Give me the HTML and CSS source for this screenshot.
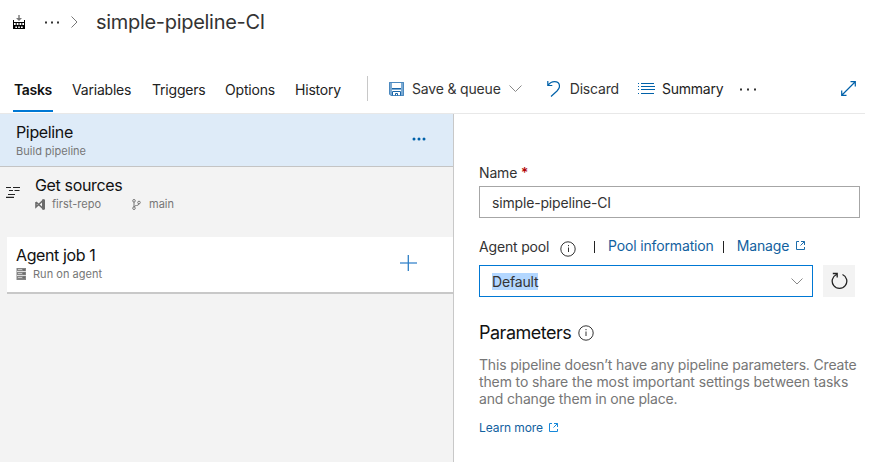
FILE: index.html
```html
<!DOCTYPE html>
<html lang="en">
<head>
<meta charset="utf-8">
<title>simple-pipeline-CI</title>
<link rel="stylesheet" href="styles.css">
</head>
<body>
<header class="crumbs">
  <svg class="build-icon" width="12" height="14" viewBox="0 0 12 14"><path d="M5.300 0h1.400v3H9L6 6 3 3h2.300z" fill="#777"/><path d="M0 5h1v2h10V5h1v9H0z" fill="#000"/><path d="M1 8h1.700v2H1zM3.700 8h1.800v2H3.700zM6.500 8h1.800v2H6.500zM9.300 8H11v2H9.300zM2.300 11.500H4V13H2.300zM5.200 11.500h1.600V13H5.200zM8 11.500h1.700V13H8z" fill="#fff"/></svg>
  <svg class="crumb-dots" width="16" height="3" viewBox="0 0 16 3" fill="#333"><path d="M1 .5h2v2H1zM7 .5h2v2H7zM13 .5h2v2h-2z"/></svg>
  <svg class="crumb-arrow" width="7" height="12" viewBox="0 0 7 12" fill="none" stroke="#777"><path d="M.5.500 6 6 .5 11.500"/></svg>
  <h1><span>simple-pipeline-CI</span></h1>
</header>
<nav class="toolbar">
  <a class="tab active">Tasks</a>
  <a class="tab variables">Variables</a>
  <a class="tab triggers">Triggers</a>
  <a class="tab options">Options</a>
  <a class="tab history">History</a>
  <span class="divider"></span>
  <button class="command save"><svg width="15" height="14" viewBox="0 0 15 14"><path d="M0 0h15v14H2l-2-2z" fill="#7baad3"/><path d="M3 1h9v5H3zM3 8h9v5H3z" fill="#fff"/><path d="M.5.500h14v13H2L.5 12z" fill="none" stroke="#4c89bf"/><path d="M3 6.500h9M3.500 13.500V9.500h8v4M6.500 13.500v-2h2v2" fill="none" stroke="#1a66a8"/></svg><span>Save &amp; queue</span><svg width="13" height="7" viewBox="0 0 13 7" fill="none" stroke="#888"><path d="M.5.500l6 6 6-6"/></svg></button>
  <button class="command discard"><svg width="13" height="17" viewBox="0 0 13 17" fill="none" stroke="#0061a9" stroke-width="1.200"><path d="M.8 1v4.500h4.500M1 5.200C3 2.500 5 1.600 7.500 1.600c3 0 5 2 5 4.600 0 2-1 3.300-2.500 4.800L4 16.500"/></svg><span>Discard</span></button>
  <button class="command summary"><svg width="17" height="11" viewBox="0 0 17 11" stroke="#0061a9"><path d="M3 .5h13M3 3.500h14M3 6.500h14M3 10.500h13"/><path d="M0 .5h1M0 3.500h1M0 6.500h1M0 10.500h1"/></svg><span>Summary</span></button>
  <svg class="more" width="18" height="3" viewBox="0 0 18 3" fill="#333"><path d="M1 .5h2v2H1zM8 .5h2v2H8zM15 .5h2v2h-2z"/></svg>
  <svg class="expand" width="15" height="15" viewBox="0 0 15 15" fill="none" stroke="#0061a9" stroke-width="1.200"><path d="M1 14 14 1M9.500.7h4.800v4.800M.7 9.500v4.800h4.800"/></svg>
</nav>
<main>
  <aside>
    <section class="pipeline"><div><h2><span>Pipeline</span></h2><p class="build-sub">Build pipeline</p></div>
      <svg width="14" height="4" viewBox="0 0 14 4" fill="#0061a9"><circle cx="2" cy="2" r="1.500"/><circle cx="7" cy="2" r="1.500"/><circle cx="12" cy="2" r="1.500"/></svg></section>
    <section class="sources">
      <svg class="steps" width="15" height="12" viewBox="0 0 15 12" stroke="#222" stroke-width="1.200"><path d="M0 1.500h5M7 1.500h7M3 4.500h4M8.500 4.500h5M2 8.500h7M0 11.400h8"/></svg>
      <div><h2><span class="get">Get sources</span></h2>
      <p><svg width="11" height="11" viewBox="0 0 11 11" fill="none" stroke="#6b6b6b" stroke-width="1.600"><path d="M1 3v5L8 1.500v8L1 3"/><path d="M8.500 0.500v10" stroke-width="3"/></svg><span class="repo">first-repo</span><svg class="branch" width="9" height="11" viewBox="0 0 9 11" fill="none" stroke="#777"><circle cx="2" cy="1.800" r="1.300"/><circle cx="2" cy="9.200" r="1.300"/><circle cx="7" cy="3.500" r="1.300"/><path d="M2 3v5M7 5c0 2-5 1-5 3"/></svg><span class="main">main</span></p></div>
    </section>
    <section class="job"><div><h2><span class="agent">Agent job 1</span></h2><p><svg width="11" height="12" viewBox="0 0 11 12"><path d="M.5 0h9.500v12H.5z" fill="#858585"/><path d="M1 3.500h9M1 7.500h9" stroke="#ddd"/><path d="M2 1.500h4M2 5.500h4M2 9.500h4" stroke="#c4c4c4"/><path d="M8 1v2M8 4.500v2M8 8.500v2" stroke="#555"/></svg><span class="run">Run on agent</span></p></div>
      <svg class="plus" width="17" height="16" viewBox="0 0 17 16"><path d="M0 8h17" stroke="#7eb0de" stroke-width="2"/><path d="M8.300 0v16" stroke="#2e7fc6" stroke-width="1.300"/></svg></section>
  </aside>
  <form>
    <label class="name-label"><span>Name</span> <b>*</b></label>
    <div class="input"><span>simple-pipeline-CI</span></div>
    <div class="pool-row"><span class="pool">Agent pool</span><svg class="info" width="16" height="16" viewBox="0 0 16 16" fill="none" stroke="#333"><circle cx="8" cy="8" r="7.200"/><path d="M8.500 6.500V11M8.500 4v1.200"/></svg><i></i><a class="pool-info">Pool information</a><i class="second"></i><a class="manage">Manage</a><svg class="external" width="9" height="9" viewBox="0 0 9 9" fill="none" stroke="#1b6cab"><path d="M3 .5H.5v8h8V6M5 .5h3.500V4M8.500.500l-4 4"/></svg></div>
    <div class="select-row"><div class="input select"><span>Default</span><svg width="12" height="7" viewBox="0 0 12 7" fill="none" stroke="#888"><path d="M.5.500 6 6 11.500.500"/></svg></div>
      <button type="button" class="refresh"><svg width="17" height="18" viewBox="0 0 17 18" fill="none" stroke="#222" stroke-width="1.300"><path d="M5.500 2.500a7.300 7.300 0 1 0 6 0M1.800 1.500h4.400v4"/></svg></button></div>
    <h3><span>Parameters</span><svg width="16" height="16" viewBox="0 0 16 16" fill="none" stroke="#333"><circle cx="8" cy="8" r="7.200"/><path d="M8 6.500V11M8 4v1.200"/></svg></h3>
    <p class="copy"><span class="l1">This pipeline doesn’t have any pipeline parameters. Create</span><br><span class="l2">them to share the most important settings between tasks</span><br><span class="l3">and change them in one place.</span></p>
    <div class="learn"><a>Learn more</a><svg width="9" height="9" viewBox="0 0 9 9" fill="none" stroke="#1688da"><path d="M3 .5H.5v8h8V6M5 .5h3.500V4M8.500.500l-4 4"/></svg></div>
  </form>
</main>
</body>
</html>
```
FILE: styles.css
```css
* { box-sizing: border-box; }
body { margin: 0; width: 869px; height: 462px; overflow: hidden; background: #fff; font: 14px/18px Inter, sans-serif; letter-spacing: -.17px; color: #333; }
h1, h2, h3, p { margin: 0; font-weight: 400; }
svg { display: block; flex: none; }
span, a { white-space: nowrap; }
button { border: 0; padding: 0; background: none; font: inherit; letter-spacing: inherit; color: inherit; }

.crumbs { display: flex; align-items: center; height: 44px; padding-left: 13px; }
.crumb-dots { margin-left: 19px; }
.crumb-arrow { margin-left: 11px; }
.crumbs h1 { margin-left: 18px; font-size: 20px; line-height: 24px; letter-spacing: -.3px; color: #333; }

.toolbar { display: flex; align-items: center; height: 70px; margin-right: 4px; padding: 20px 0 0 13px; border-bottom: 1px solid #e8e8e8; }
.tab { height: 49px; line-height: 51px; width: 58px; letter-spacing: -.2px; }
.toolbar .tab { color: #222; }
.tab.active { width: 40px; height: 48px; margin: -1px 19px 0 0; padding-left: 1px; line-height: 52px; font-weight: 600; letter-spacing: -.35px; color: #111; border-bottom: 2px solid #0078d4; }
.tab.variables { width: 80px; }
.tab.triggers { width: 73px; }
.tab.options { width: 70px; }
.tab.history { width: 72px; }
.divider { width: 1px; height: 25px; background: #c8c8c8; }
.command { display: flex; align-items: center; }
.save { margin-left: 21px; gap: 8px; }
.save span { letter-spacing: -.17px; }
.discard { margin-left: 25px; gap: 10px; }
.summary { margin-left: 19px; gap: 7px; color: #222; }
.summary span { letter-spacing: -.25px; }
.more { margin-left: 16px; margin-top: 2px; }
.expand { margin-left: auto; margin-right: 9px; }

main { display: flex; height: 348px; }
aside { width: 454px; background: #f3f3f3; border-right: 1px solid #c8c8c8; }
h2 { font-size: 16px; line-height: 20px; letter-spacing: -.35px; color: #111; }
aside p { display: flex; align-items: center; height: 16px; margin-top: 1px; font-size: 11px; line-height: 16px; letter-spacing: .03px; color: #767676; }
.pipeline { display: flex; justify-content: space-between; height: 53px; padding: 8px 27px 0 16px; background: #deebf8; border-bottom: 1px solid #c4c4c4; }
.pipeline > svg { margin-top: 15px; }
.sources { display: flex; height: 70px; padding: 8px 0 0 6px; }
.sources .steps { margin: 11px 14px 0 0; }
.repo { margin-left: 6px; width: 80px; }
.main { margin-left: 8px; }
.job { display: flex; justify-content: space-between; height: 57px; margin-left: 7px; padding: 8px 36px 0 9px; background: #fff; border-bottom: 2px solid #c8c8c8; }
.job .plus { margin-top: 10px; }
.run { margin-left: 6px; }
.agent { letter-spacing: -.4px; }

form { width: 415px; padding: 50px 0 0 25px; }
.name-label { display: block; height: 22px; }
.name-label b { color: #b00000; font-weight: 500; }
.input { display: flex; align-items: center; width: 381px; height: 32px; padding: 2px 12px 0; border: 1px solid #a6a6a6; }
.pool-row { display: flex; align-items: center; height: 47px; padding-top: 11px; }
.pool { width: 81px; }
a { color: #1261a0; }
.pool-row a { margin-top: -2px; letter-spacing: -.15px; }
.pool-row .info { margin-top: 3px; }
.pool-row i { width: 1px; height: 12px; margin: 0 13px 0 18px; background: #222; }
.pool-row .second { margin: 0 13px 0 9px; }
.external { margin: -3px 0 0 7px; }
.select-row { display: flex; gap: 10px; }
.select { width: 334px; justify-content: space-between; padding: 0 9px 0 12px; border-color: #0078d4; }
.select span { background: #b3d7ff; line-height: 17px; }
.refresh { display: flex; width: 32px; height: 32px; align-items: center; justify-content: center; background: #f3f3f3; }
h3 { display: flex; align-items: center; gap: 7px; margin-top: 24px; font-size: 18px; line-height: 24px; letter-spacing: -.5px; color: #111; }
.copy { margin-top: 11px; line-height: 17px; color: #767676; }
.l2 { letter-spacing: -.12px; }
.learn { display: flex; align-items: center; gap: 6px; margin-top: 12px; font-size: 12px; letter-spacing: -.08px; }
.learn svg { margin-top: -2px; }
```
